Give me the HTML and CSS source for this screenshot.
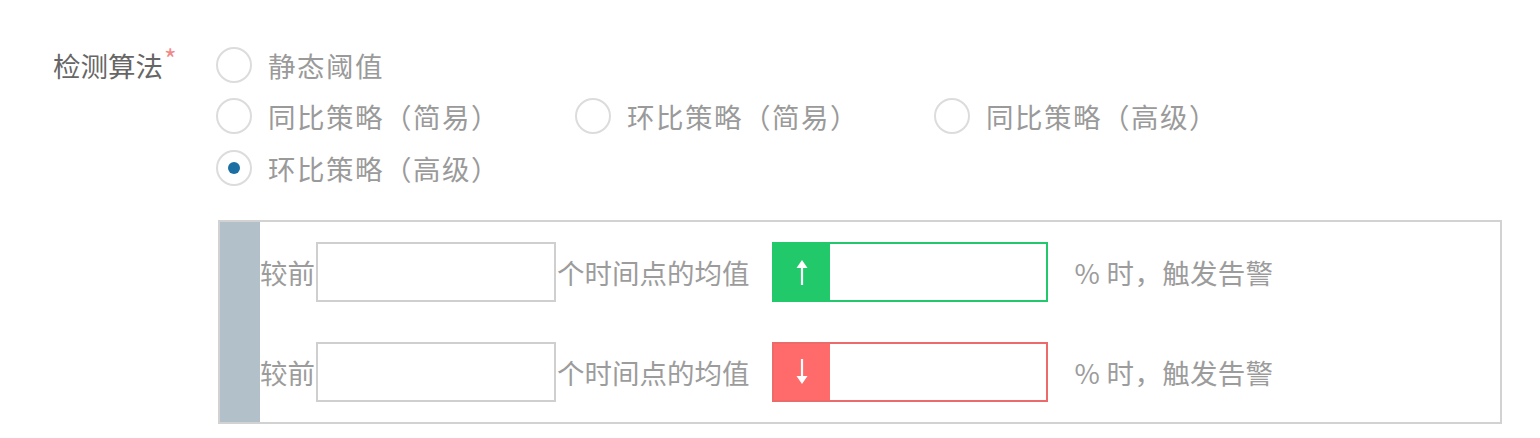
FILE: index.html
```html
<!DOCTYPE html>
<html lang="zh">
<head>
<meta charset="utf-8">
<link rel="stylesheet" href="styles.css">
</head>
<body>
<div class="form-item">
  <div class="label">检测算法<span class="req">*</span></div>
  <div class="control">
    <div class="radio-row">
      <label class="radio"><span class="circle"></span><span class="rtext">静态阈值</span></label>
    </div>
    <div class="radio-row">
      <label class="radio w"><span class="circle"></span><span class="rtext">同比策略（简易）</span></label>
      <label class="radio w"><span class="circle"></span><span class="rtext">环比策略（简易）</span></label>
      <label class="radio w"><span class="circle"></span><span class="rtext">同比策略（高级）</span></label>
    </div>
    <div class="radio-row">
      <label class="radio"><span class="circle checked"></span><span class="rtext">环比策略（高级）</span></label>
    </div>
  </div>
</div>
<div class="panel">
  <div class="bar"></div>
  <div class="rows">
    <div class="row">
      <span class="txt">较前</span>
      <div class="input"></div>
      <span class="txt">个时间点的均值</span>
      <div class="group up">
        <div class="addon">
          <svg width="14" height="28" viewBox="0 0 14 28"><path d="M7 27V8" stroke="#fff" stroke-width="2.2" fill="none"/><path d="M1.5 10L7 2l5.5 8z" fill="#fff"/></svg>
        </div>
        <div class="gin"></div>
      </div>
      <span class="txt tail">% 时，触发告警</span>
    </div>
    <div class="row">
      <span class="txt">较前</span>
      <div class="input"></div>
      <span class="txt">个时间点的均值</span>
      <div class="group down">
        <div class="addon">
          <svg width="14" height="28" viewBox="0 0 14 28"><path d="M7 1v19" stroke="#fff" stroke-width="2.2" fill="none"/><path d="M1.5 18L7 26l5.5-8z" fill="#fff"/></svg>
        </div>
        <div class="gin"></div>
      </div>
      <span class="txt tail">% 时，触发告警</span>
    </div>
  </div>
</div>
</body>
</html>
```
FILE: styles.css
```css
html, body {
  margin: 0;
  padding: 0;
  background: #fff;
  font-family: "Noto Sans CJK SC", "Noto Sans", sans-serif;
}
.form-item {
  display: flex;
  padding-top: 39px;
  padding-left: 53px;
}
.label {
  width: 163px;
  font-size: 27.5px;
  line-height: 52px;
  color: #666;
  white-space: nowrap;
}
.req {
  color: #f08a8a;
  font-size: 27px;
  line-height: 0;
  vertical-align: 7px;
  margin-left: 1px;
}
.control {
  display: flex;
  flex-direction: column;
}
.radio-row {
  display: flex;
  height: 51.5px;
  align-items: center;
}
.radio {
  display: flex;
  align-items: center;
}
.radio.w {
  width: 359px;
}
.circle {
  box-sizing: border-box;
  width: 36px;
  height: 36px;
  border: 2px solid #dcdcdc;
  border-radius: 50%;
  display: flex;
  align-items: center;
  justify-content: center;
  flex: none;
}
.circle.checked::after {
  content: "";
  width: 12px;
  height: 12px;
  border-radius: 50%;
  background: #1c6fa3;
}
.rtext {
  margin-left: 16px;
  font-size: 27.5px;
  letter-spacing: 1.5px;
  color: #9a9a9a;
  white-space: nowrap;
}
.panel {
  display: flex;
  box-sizing: border-box;
  margin-left: 218px;
  margin-top: 26px;
  width: 1284px;
  height: 204px;
  border: 2px solid #d2d2d2;
}
.bar {
  width: 40px;
  background: #b1c0c9;
  flex: none;
}
.rows {
  display: flex;
  flex-direction: column;
  padding-top: 20px;
  gap: 40px;
}
.row {
  display: flex;
  align-items: center;
  height: 60px;
}
.txt {
  font-size: 27.5px;
  color: #9c9c9c;
  white-space: nowrap;
}
.input {
  box-sizing: border-box;
  width: 240px;
  height: 60px;
  border: 2px solid #cfcfcf;
  margin: 0 1px 0 1px;
}
.group {
  box-sizing: border-box;
  display: flex;
  width: 276px;
  height: 60px;
  margin-left: 22px;
  border: 2px solid;
}
.group.up { border-color: #22c96b; }
.group.down { border-color: #ec6a6a; }
.addon {
  width: 56px;
  display: flex;
  align-items: center;
  justify-content: center;
  flex: none;
}
.up .addon { background: #22c96b; }
.down .addon { background: #ff6a6a; }
.gin { flex: 1; background: #fff; }
.tail {
  margin-left: 27px;
  letter-spacing: 0.3px;
}
```
